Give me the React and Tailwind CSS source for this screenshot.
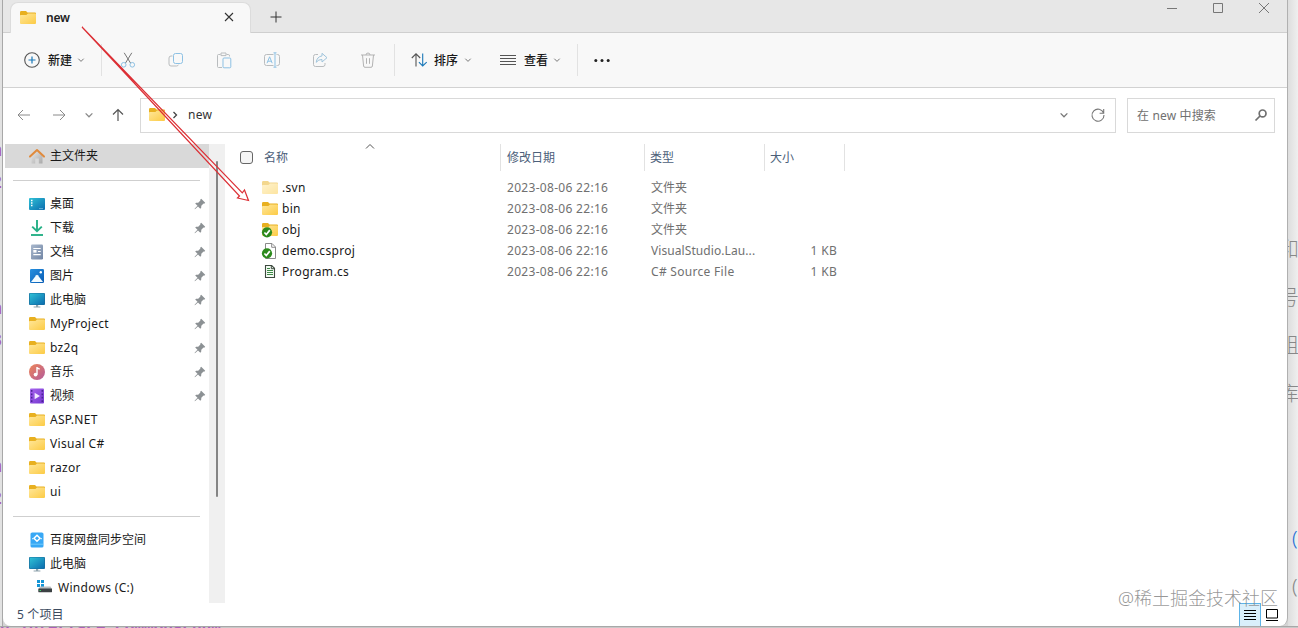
import React from 'react';

const places = [
  { icon: 'desktop', label: '桌面', pinned: true },
  { icon: 'download', label: '下载', pinned: true },
  { icon: 'document', label: '文档', pinned: true },
  { icon: 'picture', label: '图片', pinned: true },
  { icon: 'pc', label: '此电脑', pinned: true },
  { icon: 'folder', label: 'MyProject', pinned: true },
  { icon: 'folder', label: 'bz2q', pinned: true },
  { icon: 'music', label: '音乐', pinned: true },
  { icon: 'video', label: '视频', pinned: true },
  { icon: 'folder', label: 'ASP.NET' },
  { icon: 'folder', label: 'Visual C#' },
  { icon: 'folder', label: 'razor' },
  { icon: 'folder', label: 'ui' },
];

const files = [
  { icon: 'folder', faded: true, name: '.svn', type: '文件夹', size: '' },
  { icon: 'folder', name: 'bin', type: '文件夹', size: '' },
  { icon: 'folder', synced: true, name: 'obj', type: '文件夹', size: '' },
  { icon: 'file', synced: true, name: 'demo.csproj', type: 'VisualStudio.Lau...', size: '1 KB' },
  { icon: 'source', name: 'Program.cs', type: 'C# Source File', size: '1 KB' },
];

const shapes = {
  folder: (
    <>
      <path d="M0 2.4Q0 1 1.2 1H6l1.5 1.4H15Q16 2.4 16 3.4V9H0Z" fill="#e8b020" />
      <path d="M0 5.8Q0 5 .8 5H6.4L8 3.6H15q1 0 1 1V13q0 1-1 1H1q-1 0-1-1Z" fill="url(#gFolder)" />
    </>
  ),
  home: (
    <>
      <path d="M2.5 7 8 2.5 13.5 7V15.5H9.8V10.5H6.2V15.5H2.5Z" fill="url(#gHome)" />
      <path d="M1 8.6 8 2 15 8.6" fill="none" stroke="#e08a3c" strokeWidth="2" strokeLinecap="round" strokeLinejoin="round" />
    </>
  ),
  desktop: (
    <>
      <rect y="2" width="16" height="12" rx="1" fill="url(#gBlue)" />
      <path d="M2 4.5h1.5M2 7h1.5M2 9.5h1.5" stroke="#fff" strokeWidth="1.4" />
      <path d="M10.5 12.6h1M12.5 12.6h1" stroke="#bfe6f7" />
    </>
  ),
  download: (
    <>
      <path d="M8 0v11M3.2 6.6 8 11.2 12.8 6.6" fill="none" stroke="#26b086" strokeWidth="1.9" />
      <path d="M2 15h12" stroke="#26b086" strokeWidth="1.9" />
    </>
  ),
  document: (
    <>
      <rect x="2" y=".5" width="12" height="15" rx="1.2" fill="url(#gDoc)" />
      <path d="M4.3 4.5h7.4M9 7.5h2.7M4.3 10.6h7.4" stroke="#fff" strokeWidth="1.2" />
      <rect x="4.3" y="6" width="3.2" height="2.6" fill="#fff" />
    </>
  ),
  picture: (
    <>
      <rect x="1" y="1" width="14" height="14" rx="1.2" fill="url(#gPic)" />
      <path d="M2 14 7.2 7.2Q8 6.4 8.8 7.2L14 14Z" fill="#f2fbff" />
      <circle cx="11.8" cy="4.2" r="1.2" fill="#fff" />
    </>
  ),
  pc: (
    <>
      <path d="M7 12h2.2v2.6H7ZM4.6 14.4h6.8v1H4.6Z" fill="#8fa3ad" />
      <rect y="1" width="16" height="12" rx="1" fill="#1a6f9e" />
      <rect x=".7" y="1.6" width="14.6" height="10.8" rx=".5" fill="url(#gBlue)" />
    </>
  ),
  music: (
    <>
      <circle cx="8" cy="8" r="8" fill="url(#gMusic)" />
      <path d="M8 3v7.5M8 3.8l2.7 1.3" stroke="#fff" strokeWidth="1.4" fill="none" />
      <circle cx="6.6" cy="10.6" r="1.9" fill="#fff" />
    </>
  ),
  video: (
    <>
      <rect x="1" y=".5" width="14" height="15" rx="1" fill="url(#gVideo)" />
      <path d="M2.7 2v12M13.3 2v12" stroke="#4a2394" strokeWidth="1.5" strokeDasharray="1.8 1.6" />
      <path d="M5.6 4.8v6.4L11 8Z" fill="#f3eaff" />
    </>
  ),
  netdisk: (
    <>
      <rect x="1.5" y=".5" width="13" height="15" rx="1.6" fill="#38a8f5" />
      <path d="M2 12.2h12" stroke="#7fd3fb" strokeWidth=".8" />
      <path d="M8 3.2 11 6.2 8 9.2 5 6.2Z" fill="none" stroke="#fff" strokeWidth="1.5" />
      <path d="M4 6.4 3.4 7M12 6.4l.6.6" stroke="#fff" strokeWidth="1.4" />
    </>
  ),
  drive: (
    <>
      <path d="M0 0h3v3H0ZM4 0h3v3H4ZM0 4h3v3H0ZM4 4h3v3H4Z" fill="#1495d6" />
      <path d="M3 6.5h10.5l1.5 2.5H1.5Z" fill="#b9bdc0" />
      <rect x="1.3" y="8.6" width="13.7" height="3.6" rx=".4" fill="#3c4144" />
      <path d="M2.5 10.5h1.5" stroke="#3dd06c" />
    </>
  ),
  file: (
    <>
      <path d="M3.5.5H10L13.5 4V15.5H3.5Z" fill="#fff" stroke="#8b8b8b" />
      <path d="M9.7.5v3.8h3.8" fill="none" stroke="#8b8b8b" />
    </>
  ),
  source: (
    <>
      <path d="M3.5 1.5H9.7L12.5 4.3V13.5H3.5Z" fill="#f4fbf4" stroke="#3d4a3f" strokeWidth="1.1" />
      <path d="M5 4.5h3M5 6.5h6M5 8.5h6M5 10.5h6" stroke="#3d8a45" />
      <path d="M9.3 1.5v3.2h3.2" fill="none" stroke="#3d4a3f" />
    </>
  ),
};

const Gradient = ({ id, from, to }) => (
  <linearGradient id={id} x1="0" y1="0" x2="1" y2="1">
    <stop offset="0" stopColor={from} />
    <stop offset="1" stopColor={to} />
  </linearGradient>
);

const Gradients = () => (
  <svg className="absolute size-0">
    <defs>
      <Gradient id="gFolder" from="#ffe79b" to="#fccb45" />
      <Gradient id="gHome" from="#e8e8e8" to="#a9a9a9" />
      <Gradient id="gBlue" from="#2fc1d6" to="#0b6cae" />
      <Gradient id="gDoc" from="#a9b8cd" to="#7286a5" />
      <Gradient id="gPic" from="#2590e0" to="#0a5cb4" />
      <Gradient id="gMusic" from="#ee8658" to="#b35a9b" />
      <Gradient id="gVideo" from="#a765ee" to="#7437cf" />
    </defs>
  </svg>
);

const ShellIcon = ({ name, synced, faded }) => (
  <svg viewBox="0 0 16 16" className={faded ? 'size-4 shrink-0 overflow-visible opacity-50' : 'size-4 shrink-0 overflow-visible'}>
    {shapes[name]}
    {synced && (
      <>
        <circle cx="5" cy="10.3" r="5.1" fill="#2c8a1c" />
        <path d="M2.4 10.5 4.3 12.5 7.8 8.1" fill="none" stroke="#fff" strokeWidth="1.7" />
      </>
    )}
  </svg>
);

const Line = ({ d, className = 'size-4 text-[#777]', width = 1, children }) => (
  <svg viewBox="0 0 16 16" fill="none" stroke="currentColor" strokeWidth={width} className={`shrink-0 overflow-visible ${className}`}>
    <path d={d} />
    {children}
  </svg>
);

const Caret = ({ className = 'size-2 text-[#777]' }) => (
  <svg viewBox="0 0 8 8" fill="none" stroke="currentColor" className={`shrink-0 overflow-visible ${className}`}>
    <path d="M1.3 2.7 4 5.4 6.7 2.7" />
  </svg>
);

const Pin = () => (
  <svg viewBox="0 0 12 12" className="size-3 shrink-0">
    <path d="M7.2.8 11.2 4.8 10.2 5.8 9.5 5.6 7.3 7.8 7.2 9.8 6.3 10.7 4 8.4 1.2 11.1.6 11.2.8 10.5 3.5 7.8 1.2 5.6 2.1 4.7 4.2 4.7 6.4 2.5 6.2 1.8Z" fill="#8c9194" />
  </svg>
);

const isLatin = (text) => /^[\x20-\x7e]*$/.test(text);

// Latin runs are set a little wider than the 12px CJK grid
const Text = ({ children }) => (
  <span className={isLatin(children) ? 'tracking-[0.3px] whitespace-pre' : 'whitespace-pre'}>{children}</span>
);

const TitleBar = () => (
  <div className="flex h-[33px] shrink-0 items-start border-b border-[#cfcfcf] bg-[#e7e7e7]">
    <div className="ml-[7px] mt-[2px] flex h-[31px] w-[241px] items-center rounded-t-lg border border-b-0 border-[#dcdcdc] bg-[#f8f8f8] pl-[9px] pr-[14px]">
      <ShellIcon name="folder" />
      <span className="ml-[10px] flex-1 font-semibold tracking-[-0.2px] text-[#222]">new</span>
      <Line d="M1 1 9 9M9 1 1 9" className="mb-1 size-4 translate-x-[4px] translate-y-[4px] text-[#333]" width={1.1} />
    </div>
    <Line d="M8 2.5v11M2.5 8h11" className="ml-[17px] mt-[9px] size-4 text-[#333]" />
    <div className="flex-1" />
    <div className="flex gap-[30px] pr-[15px] text-[#777]">
      <Line d="M3 8.5h10" className="size-4" />
      <Line d="M3.5 3.5h9v9h-9Z" className="size-4" />
      <Line d="M3 3l10 10M13 3 3 13" className="size-4" />
    </div>
  </div>
);

const Divider = ({ className }) => <div className={`h-8 w-px shrink-0 bg-[#e2e2e2] ${className}`} />;

const Toolbar = () => (
  <div className="flex h-[55px] shrink-0 items-center border-b border-[#d2d2d2] bg-[#f8f8f8] text-[#1a1a1a]">
    <svg viewBox="0 0 16 16" fill="none" className="ml-[21px] size-4">
      <circle cx="8" cy="8" r="7.3" stroke="#555" strokeWidth="1.1" />
      <path d="M8 4.5v7M4.5 8h7" stroke="#1a78b8" strokeWidth="1.2" />
    </svg>
    <span className="ml-[8px] pt-px font-medium">新建</span>
    <Caret className="ml-[5px] size-2 text-[#777]" />
    <Divider className="ml-4" />
    <div className="flex gap-8 pl-[18px] text-[#b9bcbe]">
      <Line d="M4.2 .8 10.5 11M11.8 .8 5.5 11">
        <circle cx="3.7" cy="12.8" r="2.3" stroke="#8dc1e4" />
        <circle cx="12.3" cy="12.8" r="2.3" stroke="#8dc1e4" />
      </Line>
      <Line d="M4.5 4H3Q1 4 1 6V12Q1 14 3 14H8.5Q10 14 10.5 12.7" className="size-4">
        <rect x="5.5" y="1.5" width="9" height="10" rx="2" stroke="#8dc1e4" />
      </Line>
      <Line d="M4.5 2.5H2.5Q1.5 2.5 1.5 3.5V14.5Q1.5 15.5 2.5 15.5H6M10.5 2.5H12.5Q13.5 2.5 13.5 4V4.5M5 1h5v2.6H5Z" className="size-4">
        <rect x="7" y="6" width="7.8" height="9.8" rx="1" stroke="#8dc1e4" />
      </Line>
      <Line d="M9.5 2.5H2.5Q.5 2.5 .5 4.5V11.5Q.5 13.5 2.5 13.5H9.5M12.5 2.5H13.5Q15.5 2.5 15.5 4.5V11.5Q15.5 13.5 13.5 13.5H12.5" className="size-4">
        <path d="M3 11.2 5.6 4.8 8.2 11.2M3.9 9.2H7.3M11 1v14M9.5.8h3M9.5 15.2h3" stroke="#8dc1e4" />
      </Line>
      <Line d="M6 2.5H3.5Q1.5 2.5 1.5 4.5V12.5Q1.5 14.5 3.5 14.5H11Q13 14.5 13 12.5V11" className="size-4">
        <path d="M10 1.3 15 5.7 10 10V7.5Q6.5 7.3 4.2 10.3 5 4.7 10 3.9Z" stroke="#9fc4dc" strokeLinejoin="round" />
      </Line>
      <Line d="M1 3h14M6 3Q6 1 8 1T10 3M2.5 3 3.6 14Q3.7 15.3 5 15.3H11Q12.3 15.3 12.4 14L13.5 3M6.5 6.2v5.6M9.5 6.2v5.6" className="size-4 text-[#b3b3b3]" />
    </div>
    <Divider className="ml-[18px]" />
    <Line d="M5 14.5V2M.8 6 5 1.8 9.2 6" className="ml-4 size-4 text-[#555]" width={1.1}>
      <path d="M11.7 1.5V14M7.9 10.2 11.7 14 15.7 10.2" stroke="#1a78b8" />
    </Line>
    <span className="ml-[7px] pt-px font-medium">排序</span>
    <Caret className="ml-[6px] size-2 text-[#777]" />
    <Line d="M0 3.5h16M0 6.5h16M0 9.5h16M0 12.5h16" className="ml-[28px] size-4 text-[#555]" />
    <span className="ml-2 pt-px font-medium">查看</span>
    <Caret className="ml-[5px] size-2 text-[#777]" />
    <Divider className="ml-4" />
    <svg viewBox="0 0 16 16" className="ml-4 size-4 fill-[#222]">
      <circle cx="1.8" cy="8.5" r="1.5" />
      <circle cx="8" cy="8.5" r="1.5" />
      <circle cx="14.2" cy="8.5" r="1.5" />
    </svg>
  </div>
);

const AddressBar = () => (
  <div className="flex h-14 shrink-0 items-center pb-[2px] pr-3 text-[#8a8a8a]">
    <Line d="M14 8H2M7 3 2 8 7 13" className="ml-[13px] size-4" />
    <Line d="M2 8H14M9 3 14 8 9 13" className="ml-[19px] size-4" />
    <Caret className="ml-[17px] size-2.5" />
    <Line d="M8 14V2.5M3 7.5 8 2.5 13 7.5" className="ml-[16px] size-4 text-[#555]" width={1.2} />
    <div className="ml-[14px] flex h-[35px] w-[976px] shrink-0 items-center border border-[#d9d9d9] pl-2 pr-[9px] text-[#333]">
      <ShellIcon name="folder" />
      <svg viewBox="0 0 8 8" className="ml-[6px] size-2 fill-none stroke-[#444] stroke-[1.3]">
        <path d="M2.5 1 5.5 4 2.5 7" />
      </svg>
      <span className="ml-[9px] flex-1"><Text>new</Text></span>
      <Caret className="size-2.5 text-[#777]" />
      <Line d="M13.6 6A6 6 0 1 0 14 8M13.7 2v4.2H9.6" className="ml-[21px] size-4 text-[#777]" width={1.1} />
    </div>
    <div className="ml-[11px] flex h-[35px] w-[148px] shrink-0 items-center border border-[#d9d9d9] pl-[9px] pr-[5px] text-[#707070]">
      <span className="flex-1 pt-[2px] tracking-[0.15px]">在 new 中搜索</span>
      <Line d="M7 9 2.5 13.5" className="size-4" width={1.7}>
        <circle cx="9.6" cy="6.4" r="3.4" />
      </Line>
    </div>
  </div>
);

const Sidebar = () => (
  <div className="flex w-[206px] shrink-0 flex-col pl-[2px] text-[#191919]">
    <div className="flex h-6 shrink-0 items-center bg-[#d9d9d9] pl-6">
      <ShellIcon name="home" />
      <span className="ml-[5px]">主文件夹</span>
    </div>
    <div className="ml-2 mr-[9px] mt-3 h-px shrink-0 bg-[#cfcfcf]" />
    <div className="mt-[11px]">
      {places.map((place) => (
        <div key={place.label} className="flex h-6 items-center pl-6 pr-[3px]">
          <ShellIcon name={place.icon} />
          <span className="ml-[5px] flex-1"><Text>{place.label}</Text></span>
          {place.pinned && <Pin />}
        </div>
      ))}
    </div>
    <div className="ml-2 mr-[9px] mt-3 h-px shrink-0 bg-[#cfcfcf]" />
    <div className="mt-[11px]">
      <div className="flex h-6 items-center pl-6">
        <ShellIcon name="netdisk" />
        <span className="ml-[5px]">百度网盘同步空间</span>
      </div>
      <div className="flex h-6 items-center pl-6">
        <ShellIcon name="pc" />
        <span className="ml-[5px]">此电脑</span>
      </div>
      <div className="flex h-6 items-center pl-8">
        <ShellIcon name="drive" />
        <span className="ml-[5px]"><Text>Windows (C:)</Text></span>
      </div>
    </div>
  </div>
);

const FileList = () => (
  <div className="flex-1 text-[#707070]">
    <div className="relative flex h-[27px] items-center text-[#4c607a]">
      <div className="ml-[15px] size-[13px] rounded-[3px] border border-[#666] bg-[#f5f5f5]" />
      <span className="ml-[11px] w-[236px]">名称</span>
      <div className="flex h-full w-36 items-center border-l border-[#e2e2e2] pl-[6px]">修改日期</div>
      <div className="flex h-full w-[120px] items-center border-l border-[#e2e2e2] pl-[5px]">类型</div>
      <div className="flex h-full w-[81px] items-center border-x border-[#e2e2e2] pl-[5px]">大小</div>
      <svg viewBox="0 0 8 8" className="absolute left-[141px] -top-[2px] size-2 overflow-visible fill-none stroke-[#555]">
        <path d="M0 6.5 4 2.5 8 6.5" />
      </svg>
    </div>
    <div className="mt-[6px]">
      {files.map((file) => (
        <div key={file.name} className="flex h-[21px] items-center pl-[37px]">
          <ShellIcon name={file.icon} synced={file.synced} faded={file.faded} />
          <span className="ml-1 w-[225px] text-[#191919]"><Text>{file.name}</Text></span>
          <span className="w-36"><Text>2023-08-06 22:16</Text></span>
          <span className={file.type.startsWith('Visual') ? 'w-[120px] [&>span]:tracking-[0.08px]' : 'w-[120px]'}>
            <Text>{file.type}</Text>
          </span>
          <span className="w-[66px] text-right"><Text>{file.size}</Text></span>
        </div>
      ))}
    </div>
  </div>
);

const StatusBar = () => (
  <div className="flex h-6 shrink-0 items-center pl-[14px] pr-[9px] text-[#3b4a5e]">
    <span className="flex-1 tracking-[0.15px]">5 个项目</span>
    <div className="flex h-6 w-[22px] items-center justify-center border border-[#5db4e8] bg-[#d9effb]">
      <svg viewBox="0 0 12 12" className="size-3 stroke-black">
        <path d="M0 1.5h12M0 4.5h12M0 7.5h12M0 10.5h12" />
      </svg>
    </div>
    <svg viewBox="0 0 12 12" className="ml-[5px] size-3 overflow-visible fill-none stroke-black">
      <path d="M.5 .5h11v8.5H.5ZM0 11.5h12" />
    </svg>
  </div>
);

// slivers of the editor left visible behind the window
const edgeLeft = ['n', '2', '', '', '', 'n', '8', '', '', '', 'n', '2'];

const App = () => (
  <div className="relative h-[628px] w-[1298px] overflow-hidden bg-[#d4d4d4] font-['Noto_Sans','Noto_Sans_CJK_SC',sans-serif] text-[12px] leading-[18px]">
    <Gradients />
    <div className="flex h-[626px]">
      <div className="w-[3px] shrink-0 overflow-hidden border-r border-[#a8a8a8] bg-[#e2e2e2] pt-[136px] font-['Liberation_Mono',monospace] text-[18px] leading-[31.6px] font-bold text-[#a960b8]">
        {edgeLeft.map((ch, i) => (
          <div key={i} className="flex h-[31.6px] w-[2px] justify-end overflow-hidden">{ch}</div>
        ))}
      </div>
      <div className="flex w-[1285px] shrink-0 flex-col overflow-hidden rounded-b-lg border-r border-[#b0b0b0] bg-white">
        <TitleBar />
        <Toolbar />
        <AddressBar />
        <div className="flex h-[459px] shrink-0">
          <Sidebar />
          <div className="flex w-4 shrink-0 justify-center bg-[#f0f0f0] pt-[17px]">
            <div className="h-[336px] w-[2px] rounded bg-[#858585]" />
          </div>
          <FileList />
        </div>
        <StatusBar />
      </div>
      <div className="w-[10px] shrink-0 overflow-hidden bg-gradient-to-r from-[#dedede] to-[#efefef] pt-[226px] text-[20px] leading-[48px] font-light text-[#888]">
        <div className="indent-[-9px]">和</div>
        <div className="indent-[-9px]">号</div>
        <div className="indent-[-9px]">组</div>
        <div className="indent-[-9px]">库</div>
        <div className="mt-[96px] indent-[4px] text-[#1f6fd6]">(</div>
        <div className="indent-[4px]">(</div>
      </div>
    </div>
    <div className="flex h-[2px] items-center overflow-hidden border-t border-[#a8a8a8] bg-[#c8c8c8] font-['Liberation_Mono',monospace] text-[16px] font-bold whitespace-pre text-[#a960b8]">
      n interface CommonsEnum
    </div>
    <div className="absolute left-[1118px] top-[586px] text-[18px] leading-6 font-light whitespace-nowrap text-[#7c7c7c]/80">@稀土掘金技术社区</div>
    <svg viewBox="0 0 1298 628" className="pointer-events-none absolute inset-0 h-[628px] w-[1298px]" fill="none" stroke="#dc2f35">
      <path d="M82 27 239.5 196 237.5 198 248.5 200.5 244.5 190 242.3 192.8Z" strokeWidth="1.2" />
    </svg>
  </div>
);

export default App;
